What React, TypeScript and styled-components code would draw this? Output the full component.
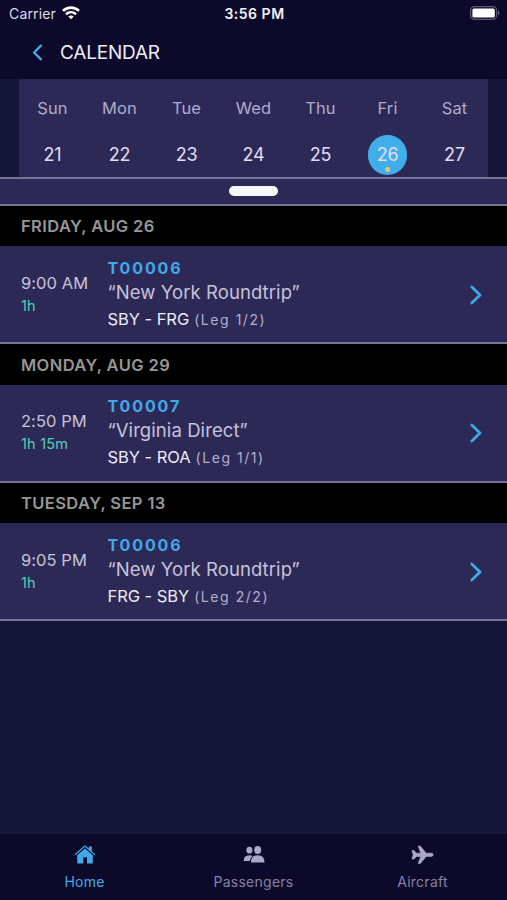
import React from "react";
import styled, { createGlobalStyle } from "styled-components";

const GlobalStyle = createGlobalStyle`
  *, *::before, *::after { box-sizing: border-box; }
  html, body { margin: 0; padding: 0; background: #151539; }
  body { font-family: Inter, "Liberation Sans", sans-serif; }
`;

const Screen = styled.div`
  display: flex;
  flex-direction: column;
  width: 507px;
  height: 900px;
  overflow: hidden;
  background: #151539;
  color: #c9c7dc;
`;

const StatusBar = styled.div`
  display: grid;
  grid-template-columns: 1fr auto 1fr;
  align-items: center;
  height: 28px;
  padding: 0 7px 2px 9px;
  background: #0d092b;
  color: #dddce8;
  font-size: 14px;
`;

const Carrier = styled.div`
  display: flex;
  align-items: center;
  gap: 6px;
  letter-spacing: 0.15px;
`;

const Clock = styled.div`
  color: #f4f3f8;
  font-weight: 600;
  font-size: 14px;
  letter-spacing: 0.5px;
`;

const BatterySlot = styled.div`
  display: flex;
  justify-content: flex-end;
`;

const Header = styled.header`
  display: flex;
  align-items: center;
  height: 51px;
  padding: 0 0 3px 32px;
  gap: 17px;
  background: #0d092b;
`;

const Title = styled.h1`
  margin: 0;
  font-size: 19px;
  font-weight: 400;
  letter-spacing: -0.2px;
  color: #eeedf5;
`;

const Week = styled.section`
  display: grid;
  grid-template-columns: repeat(7, 67px);
  height: 97.6px;
  margin: 0 19px;
  background: #2d2957;
`;

const Day = styled.div`
  display: flex;
  flex-direction: column;
  align-items: center;
`;

const DayName = styled.span`
  margin-top: 17px;
  font-size: 16.5px;
  line-height: 24px;
  letter-spacing: 0.1px;
  color: #aeabcb;
`;

const DayNumber = styled.span<{ $active?: boolean }>`
  position: relative;
  display: flex;
  align-items: center;
  justify-content: center;
  width: 39.5px;
  height: 39.5px;
  margin-top: 15px;
  border-radius: 50%;
  background: ${(p) => (p.$active ? "#40aeeb" : "transparent")};
  color: #e0def0;
  font-size: 18px;
  letter-spacing: -0.2px;
`;

const EventDot = styled.i`
  position: absolute;
  bottom: 2.5px;
  left: 17.5px;
  width: 5px;
  height: 5px;
  border-radius: 50%;
  background: #e5c65f;
`;

const HandleBar = styled.div`
  display: flex;
  align-items: center;
  justify-content: center;
  height: 29.4px;
  border-top: 2px solid #77749a;
  border-bottom: 2px solid #77749a;
  background: #2d2957;
`;

const Grip = styled.div`
  width: 49px;
  height: 10px;
  border-radius: 5px;
  background: #f7f7fa;
`;

const Agenda = styled.main`
  flex: 1;
`;

const DateHeading = styled.h2`
  display: flex;
  align-items: center;
  height: 40.4px;
  margin: 0;
  padding: 0 21px;
  background: #000;
  color: #969696;
  font-size: 16.5px;
  font-weight: 600;
  letter-spacing: 0.4px;
`;

const TripRow = styled.article`
  display: grid;
  grid-template-columns: 86.5px 1fr auto;
  align-items: center;
  height: 98.1px;
  padding: 1px 25px 0 21px;
  border-bottom: 2px solid #77749a;
  background: #2d2957;
`;

const When = styled.div`
  padding-bottom: 1px;
`;

const Time = styled.div`
  font-size: 16.5px;
  line-height: 23px;
  letter-spacing: 0.05px;
  color: #c5c3d7;
`;

const Duration = styled.div`
  font-size: 14.5px;
  line-height: 22px;
  letter-spacing: 0.2px;
  color: #4fd3b8;
`;

const TripId = styled.div`
  font-size: 16px;
  font-weight: 700;
  line-height: 22px;
  letter-spacing: 1.9px;
  color: #40a9e8;
`;

const TripName = styled.div`
  font-size: 18.5px;
  line-height: 27px;
  letter-spacing: 0.08px;
  color: #c5c3d7;
`;

const Route = styled.div`
  font-size: 16.5px;
  line-height: 26px;
  letter-spacing: -0.05px;
  color: #edecf5;
`;

const Leg = styled.span`
  margin-left: 5px;
  font-size: 14px;
  letter-spacing: 1.55px;
  color: #b3b0ca;
`;

const TabBar = styled.nav`
  display: grid;
  grid-template-columns: repeat(3, 1fr);
  height: 66px;
  background: #0d092b;
`;

const Tab = styled.div<{ $active?: boolean }>`
  display: flex;
  flex-direction: column;
  align-items: center;
  padding-top: 10px;
  gap: 6.4px;
  font-size: 14px;
  line-height: 20px;
  letter-spacing: 0.25px;
  color: ${(p) => (p.$active ? "#40a9e8" : "#8582a5")};
`;

const Chevron = ({ back = false }: { back?: boolean }) => (
  <svg width={back ? 11 : 12} height={back ? 17 : 20} viewBox="0 0 12 20" fill="none" stroke="#40a9e8" strokeWidth={2.8} strokeLinecap="round" strokeLinejoin="round">
    <path d={back ? "M10 2L2 10L10 18" : "M1.8 2L10 10L1.8 18"} />
  </svg>
);

const Wifi = () => (
  <svg width="18" height="14" viewBox="0 0 18 14" fill="none" stroke="#fff" strokeWidth="2.6">
    <path d="M1 4.9C5.5.5 12.5.5 17 4.9" />
    <path d="M4 8.2C7 5.5 11 5.5 14 8.2" />
    <path d="M6.3 10.4C8 9.1 10 9.1 11.7 10.4L9 13.2Z" fill="#fff" stroke="none" />
  </svg>
);

const Battery = () => (
  <svg width="30" height="14" viewBox="0 0 30 14">
    <rect x=".6" y=".6" width="26" height="12.8" rx="3.8" fill="none" stroke="#5b5872" strokeWidth="1.2" />
    <rect x="2.4" y="2.4" width="22.4" height="9.2" rx="1.6" fill="#fff" />
    <path d="M28 4.8Q31 7 28 9.2Z" fill="#6b6880" />
  </svg>
);

const HomeIcon = () => (
  <svg width="22" height="22" viewBox="0 0 22 22">
    <path d="M3.2 11.2L11 4.3L18.8 11.2V18.4Q18.8 19.4 17.8 19.4H13V13.2H9.4V19.4H4.2Q3.2 19.4 3.2 18.4Z" fill="currentColor" />
    <path d="M14.9 2.6H17.8V8L14.9 5.4Z" fill="currentColor" />
    <path d="M1.6 10.2L11 1.9L20.4 10.2" fill="none" stroke="currentColor" strokeWidth="1.3" strokeLinecap="round" strokeLinejoin="round" />
    <path d="M2.6 11L11 3.6L19.4 11" fill="none" stroke="#0d092b" strokeWidth=".8" />
  </svg>
);

const PeopleIcon = () => (
  <svg width="22" height="22" viewBox="0 0 22 22" fill="#aaa7c7">
    <ellipse cx="6.4" cy="6.2" rx="3" ry="3.4" />
    <ellipse cx="14.7" cy="5.9" rx="3.5" ry="4" />
    <path d="M.8 17Q.3 11.4 6.4 11.2Q8.4 11.2 9.7 12Q7.2 13.6 6.8 17Z" />
    <path d="M8 18.4Q8 11.2 14.8 11.2Q21.4 11.2 21.6 18.4Z" />
  </svg>
);

const PlaneIcon = () => (
  <svg width="24" height="22" viewBox="0 0 24 22" fill="#aaa7c7" stroke="#aaa7c7" strokeWidth=".7" strokeLinejoin="round">
    <path d="M1 6.6H3L5.4 9.2H9.8L7.2 2H9.2L15.2 9.2H20Q22.3 9.4 22.3 10.8Q22.3 12.2 20 12.4H15.2L9.2 19.6H7.2L9.8 12.4H5.4L3 15H1L2.2 10.8Z" />
  </svg>
);

const week = [
  ["Sun", "21"], ["Mon", "22"], ["Tue", "23"], ["Wed", "24"],
  ["Thu", "25"], ["Fri", "26"], ["Sat", "27"],
];

const trips = [
  { date: "FRIDAY, AUG 26", time: "9:00 AM", duration: "1h", id: "T00006", name: "“New York Roundtrip”", route: "SBY - FRG", leg: "(Leg 1/2)" },
  { date: "MONDAY, AUG 29", time: "2:50 PM", duration: "1h 15m", id: "T00007", name: "“Virginia Direct”", route: "SBY - ROA", leg: "(Leg 1/1)" },
  { date: "TUESDAY, SEP 13", time: "9:05 PM", duration: "1h", id: "T00006", name: "“New York Roundtrip”", route: "FRG - SBY", leg: "(Leg 2/2)" },
];

export default function App() {
  return (
    <Screen>
      <GlobalStyle />
      <StatusBar>
        <Carrier>Carrier <Wifi /></Carrier>
        <Clock>3:56 PM</Clock>
        <BatterySlot><Battery /></BatterySlot>
      </StatusBar>
      <Header>
        <Chevron back />
        <Title>CALENDAR</Title>
      </Header>
      <Week>
        {week.map(([name, number]) => (
          <Day key={name}>
            <DayName>{name}</DayName>
            <DayNumber $active={number === "26"}>
              {number}
              {number === "26" && <EventDot />}
            </DayNumber>
          </Day>
        ))}
      </Week>
      <HandleBar><Grip /></HandleBar>
      <Agenda>
        {trips.map((t) => (
          <section key={t.date}>
            <DateHeading>{t.date}</DateHeading>
            <TripRow>
              <When>
                <Time>{t.time}</Time>
                <Duration>{t.duration}</Duration>
              </When>
              <div>
                <TripId>{t.id}</TripId>
                <TripName>{t.name}</TripName>
                <Route>{t.route}<Leg>{t.leg}</Leg></Route>
              </div>
              <Chevron />
            </TripRow>
          </section>
        ))}
      </Agenda>
      <TabBar>
        <Tab $active><HomeIcon />Home</Tab>
        <Tab><PeopleIcon />Passengers</Tab>
        <Tab><PlaneIcon />Aircraft</Tab>
      </TabBar>
    </Screen>
  );
}
